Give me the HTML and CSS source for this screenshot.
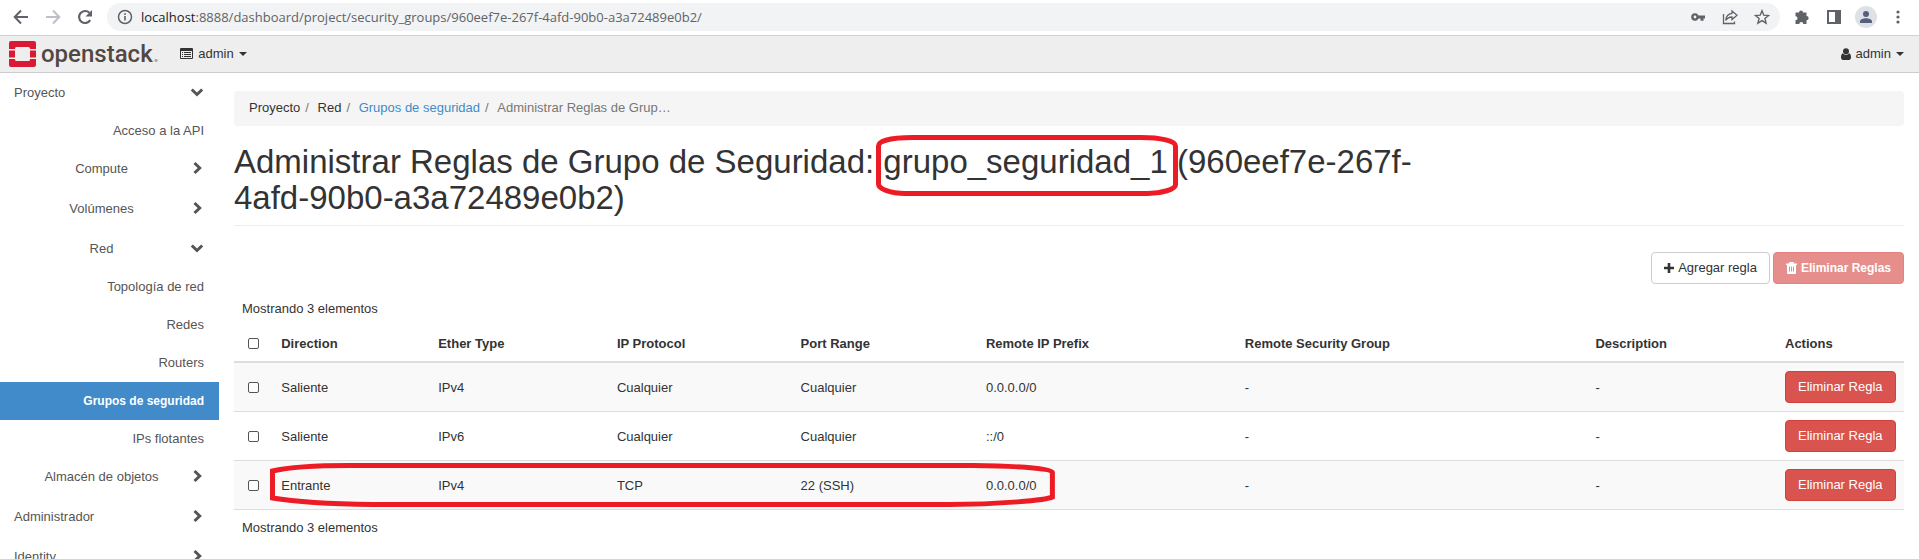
FILE: index.html
```html
<!DOCTYPE html>
<html lang="es">
<head>
<meta charset="utf-8">
<title>Administrar Reglas de Grupo de Seguridad - OpenStack Dashboard</title>
<link rel="stylesheet" href="styles.css">
</head>
<body>
<svg class="defs" width="0" height="0" aria-hidden="true">
  <symbol id="chev-right" viewBox="0 0 16 16"><path d="M5.500 3l5.200 5-5.200 5" fill="none" stroke="currentColor" stroke-width="3"/></symbol>
  <symbol id="chev-down" viewBox="0 0 16 16"><path d="M2.800 5.500L8 10.500l5.200-5" fill="none" stroke="currentColor" stroke-width="3"/></symbol>
</svg>
<div class="window">
  <div class="browser">
    <button class="tool" aria-label="Atrás"><svg width="16" height="16" viewBox="0 0 16 16"><path d="M15 8H2M8 1.500L1.700 8 8 14.500" fill="none" stroke="#5f6368" stroke-width="2"/></svg></button>
    <button class="tool" aria-label="Adelante"><svg width="16" height="16" viewBox="0 0 16 16"><path d="M1 8h13M8 1.500L14.300 8 8 14.500" fill="none" stroke="#bdc1c6" stroke-width="2"/></svg></button>
    <button class="tool" aria-label="Recargar"><svg width="16" height="16" viewBox="0 0 16 16"><path d="M13.200 11.200A6 6 0 1 1 12.400 3.800" fill="none" stroke="#5f6368" stroke-width="2.200"/><path d="M15 1v6.500H8.500z" fill="#5f6368"/></svg></button>
    <div class="address">
      <svg width="16" height="16" viewBox="0 0 16 16"><circle cx="8" cy="8" r="6.500" fill="none" stroke="#5f6368" stroke-width="1.500"/><path d="M8 7v4.500M8 4.300v1.600" stroke="#5f6368" stroke-width="1.600"/></svg>
      <span class="url"><span class="host">localhost</span>:8888/dashboard/project/security_groups/960eef7e-267f-4afd-90b0-a3a72489e0b2/</span>
      <button class="tool" aria-label="Contraseñas"><svg width="16" height="16" viewBox="0 0 16 16"><path fill-rule="evenodd" d="M5 4.200a3.800 3.800 0 0 1 3.500 2.300H15v3h-1.500v2.300h-3V9.500h-2A3.800 3.800 0 1 1 5 4.200zm0 2.400a1.400 1.400 0 1 0 0 2.800 1.400 1.400 0 0 0 0-2.800z" fill="#5f6368"/></svg></button>
      <button class="tool" aria-label="Compartir"><svg width="16" height="16" viewBox="0 0 16 16"><path d="M1.500 5v9.500h11v-2M10 2l5 4.300-5 4.200V8C7 8 5 9.300 3.700 11.300 4 7.800 6 4.800 10 4.300z" fill="none" stroke="#5f6368" stroke-width="1.300"/></svg></button>
      <button class="tool" aria-label="Favoritos"><svg width="16" height="16" viewBox="0 0 16 16"><path d="M8 1.800l1.800 4.400 4.800.3-3.700 3 1.200 4.700L8 11.600l-4.100 2.600 1.200-4.700-3.700-3 4.800-.3z" fill="none" stroke="#5f6368" stroke-width="1.400"/></svg></button>
    </div>
    <div class="extras">
      <button class="tool" aria-label="Extensiones"><svg width="16" height="16" viewBox="0 0 16 16"><path d="M5 3.500a2 2 0 0 1 4 0h3.500V7a2 2 0 0 1 0 4.300V15H9.300a2 2 0 0 0-4 0H1.500v-3.700a2 2 0 0 0 0-4V3.500z" fill="#5f6368"/></svg></button>
      <button class="tool" aria-label="Panel lateral"><svg width="16" height="16" viewBox="0 0 16 16"><path fill-rule="evenodd" d="M1 1h14v14H1zm2 2v10h6V3z" fill="#5f6368"/></svg></button>
      <button class="tool avatar" aria-label="Perfil"><svg width="22" height="22" viewBox="0 0 22 22"><circle cx="11" cy="11" r="11" fill="#dee1e6"/><circle cx="11" cy="8" r="3" fill="#56607a"/><path d="M5 17v-1.500c0-2.300 3.500-3.300 6-3.300s6 1 6 3.300V17z" fill="#56607a"/></svg></button>
      <button class="tool" aria-label="Menú"><svg width="16" height="16" viewBox="0 0 16 16" fill="#5f6368"><circle cx="8" cy="3" r="1.600"/><circle cx="8" cy="8" r="1.600"/><circle cx="8" cy="13" r="1.600"/></svg></button>
    </div>
  </div>

  <header class="navbar">
    <a class="brand" href="#">
      <svg width="27" height="26" viewBox="0 0 27 26" aria-hidden="true"><g fill="#da1a32"><path d="M2 0h23a2 2 0 0 1 2 2v6h-6V7.500a1.500 1.500 0 0 0-1.500-1.500h-12A1.500 1.500 0 0 0 6 7.500V8H0V2a2 2 0 0 1 2-2z"/><path d="M0 9.500h6v7H0zM21 9.500h6v7h-6z"/><path d="M0 18h6v.5A1.500 1.500 0 0 0 7.500 20h12a1.500 1.500 0 0 0 1.500-1.500V18h6v6a2 2 0 0 1-2 2H2a2 2 0 0 1-2-2z"/></g></svg>
      <span class="brand-name">openstack<span class="mark">.</span></span>
    </a>
    <button class="menu">
      <svg width="13" height="11" viewBox="0 0 13 11"><path fill-rule="evenodd" d="M1 0h11a1 1 0 0 1 1 1v9a1 1 0 0 1-1 1H1a1 1 0 0 1-1-1V1a1 1 0 0 1 1-1zm0 3v7h11V3z" fill="#333"/><path d="M2 4.500h1M4 4.500h7M2 6.500h1M4 6.500h7M2 8.500h1M4 8.500h7" stroke="#333"/></svg>
      <span>admin</span><i class="caret"></i>
    </button>
    <button class="menu user">
      <svg width="10" height="12" viewBox="0 0 10 12" fill="#333"><circle cx="5" cy="3.200" r="3"/><path d="M2 5.200c1.600 2 4.400 2 6 0C9.500 5.600 10 7.500 10 9.500 10 11 9 12 8 12H2c-1 0-2-1-2-2.500C0 7.500.5 5.600 2 5.200z"/></svg>
      <span>admin</span><i class="caret"></i>
    </button>
  </header>

  <div class="body">
    <nav class="sidebar">
      <a class="group top" href="#"><span>Proyecto</span><svg class="chev"><use href="#chev-down"/></svg></a>
      <div class="leaves"><a class="leaf" href="#">Acceso a la API</a></div>
      <a class="group" href="#"><span>Compute</span><svg class="chev"><use href="#chev-right"/></svg></a>
      <a class="group" href="#"><span>Volúmenes</span><svg class="chev"><use href="#chev-right"/></svg></a>
      <a class="group" href="#"><span>Red</span><svg class="chev"><use href="#chev-down"/></svg></a>
      <div class="leaves">
        <a class="leaf" href="#">Topología de red</a>
        <a class="leaf" href="#">Redes</a>
        <a class="leaf" href="#">Routers</a>
        <a class="leaf active" href="#">Grupos de seguridad</a>
        <a class="leaf" href="#">IPs flotantes</a>
      </div>
      <a class="group" href="#"><span>Almacén de objetos</span><svg class="chev"><use href="#chev-right"/></svg></a>
      <a class="group top" href="#"><span>Administrador</span><svg class="chev"><use href="#chev-right"/></svg></a>
      <a class="group top" href="#"><span>Identity</span><svg class="chev"><use href="#chev-right"/></svg></a>
    </nav>

    <main class="content">
      <ol class="breadcrumb">
        <li>Proyecto</li><li>Red</li><li><a href="#">Grupos de seguridad</a></li><li class="current">Administrar Reglas de Grup…</li>
      </ol>
      <div class="page-header">
        <h1>Administrar Reglas de Grupo de Seguridad: <span class="marked">grupo_seguridad_1<svg class="ring ring-title" viewBox="0 0 302 61" preserveAspectRatio="none" aria-hidden="true"><path d="M2.500 11C2.500 6 15 2.500 37 2.500H265C285 2.500 299.500 6 299.500 11V50C299.500 54 286 58.500 272 58.500H29C15 58.500 2.500 54 2.500 49Z"/></svg></span> (960eef7e-267f-4afd-90b0-a3a72489e0b2)</h1>
      </div>
      <div class="actions">
        <button class="btn"><svg width="10" height="10" viewBox="0 0 10 10"><path d="M5 0v10M0 5h10" stroke="#333" stroke-width="2.600"/></svg>Agregar regla</button>
        <button class="btn danger strong" disabled><svg width="11" height="12" viewBox="0 0 11 12"><path fill-rule="evenodd" d="M3.500 0h4l.6 1.500H11V3h-1v8a1 1 0 0 1-1 1H2a1 1 0 0 1-1-1V3H0V1.500h2.900zM3 4.500v5h1v-5zm2 0v5h1v-5zm2 0v5h1v-5z" fill="#fff"/></svg>Eliminar Reglas</button>
      </div>
      <div class="count">Mostrando 3 elementos</div>
      <table class="rules">
        <colgroup><col class="c-check"><col class="c-dir"><col class="c-ether"><col class="c-proto"><col class="c-port"><col class="c-prefix"><col class="c-group"><col class="c-desc"><col></colgroup>
        <thead>
          <tr><th class="check"><input type="checkbox" aria-label="Seleccionar todo"></th><th>Direction</th><th>Ether Type</th><th>IP Protocol</th><th>Port Range</th><th>Remote IP Prefix</th><th>Remote Security Group</th><th>Description</th><th>Actions</th></tr>
        </thead>
        <tbody>
          <tr><td class="check"><input type="checkbox" aria-label="Seleccionar regla 1"></td><td>Saliente</td><td>IPv4</td><td>Cualquier</td><td>Cualquier</td><td>0.0.0.0/0</td><td>-</td><td>-</td><td><button class="btn danger">Eliminar Regla</button></td></tr>
          <tr><td class="check"><input type="checkbox" aria-label="Seleccionar regla 2"></td><td>Saliente</td><td>IPv6</td><td>Cualquier</td><td>Cualquier</td><td>::/0</td><td>-</td><td>-</td><td><button class="btn danger">Eliminar Regla</button></td></tr>
          <tr class="marked-row"><td class="check"><input type="checkbox" aria-label="Seleccionar regla 3"><svg class="ring ring-row" viewBox="0 0 786 44" preserveAspectRatio="none" aria-hidden="true"><path d="M2.500 8C15 5 45 2.500 80 2.500H704C745 3 783.500 5 783.500 9V34C778 37 730 41.500 680 41.500H103C60 41 20 38 2.500 35Z"/></svg></td><td>Entrante</td><td>IPv4</td><td>TCP</td><td>22 (SSH)</td><td>0.0.0.0/0</td><td>-</td><td>-</td><td><button class="btn danger">Eliminar Regla</button></td></tr>
        </tbody>
      </table>
      <div class="count">Mostrando 3 elementos</div>
    </main>
  </div>
</div>
</body>
</html>
```
FILE: styles.css
```css
* { box-sizing: border-box; }
body {
  margin: 0;
  font: 13px/19px "Liberation Sans", Arial, sans-serif;
  color: #333;
  background: #fff;
}
a { color: inherit; text-decoration: none; }
button { font: inherit; color: inherit; cursor: pointer; }
svg { display: block; flex: none; }
.defs { position: absolute; }
.window { height: 100vh; overflow: hidden; display: flex; flex-direction: column; }

/* Browser bar */
.browser {
  display: flex;
  align-items: center;
  gap: 16px;
  flex: none;
  padding: 3px 13px 4px 13px;
  border-bottom: 1px solid #d0d1d3;
}
.tool { border: 0; padding: 0; background: none; }
.address {
  flex: 1;
  display: flex;
  align-items: center;
  gap: 16px;
  height: 28px;
  margin-left: -2px;
  padding: 0 10px;
  border-radius: 14px;
  background: #f1f3f4;
}
.url {
  flex: 1;
  margin-left: -8px;
  font: 13px/20px "Open Sans", "Noto Sans", sans-serif;
  color: #5f6368;
}
.host { color: #202124; }
.extras { display: flex; align-items: center; gap: 16px; margin-left: -2px; }
.avatar { margin: 0 -3px; }

/* Top bar */
.navbar {
  display: flex;
  align-items: center;
  flex: none;
  height: 37px;
  padding: 0 15px 1px 9px;
  background: #eee;
  border-bottom: 1px solid #ccc;
}
.brand { display: flex; align-items: center; gap: 5px; margin-right: 21px; }
.brand-name { font: 500 24px/28px "Liberation Sans Narrow", Roboto, sans-serif; color: #524843; }
.mark { color: #aaa; }
.menu {
  display: flex;
  align-items: center;
  gap: 5px;
  border: 0;
  padding: 0;
  background: none;
}
.user { margin-left: auto; }
.caret {
  border-top: 4px solid #333;
  border-left: 4px solid transparent;
  border-right: 4px solid transparent;
}

/* Sidebar */
.body { display: flex; flex: 1; min-height: 0; }
.sidebar { width: 219px; flex: none; color: #555; overflow: hidden; }
.group {
  display: flex;
  align-items: center;
  height: 40px;
  padding: 0 14px 2px;
}
.group span { flex: 1; text-align: center; }
.group.top span { text-align: left; }
.chev { width: 16px; height: 16px; }
.leaves { margin: -1px 0; }
.leaf { display: block; padding: 0 15px; line-height: 38px; text-align: right; }
.leaf.active { background: #428bca; color: #fff; font-size: 12px; font-weight: bold; }

/* Content */
.content { flex: 1; min-width: 0; padding: 18px 15px 0; }
.breadcrumb {
  display: flex;
  list-style: none;
  margin: 0 0 18px;
  padding: 7px 15px 9px;
  border-radius: 4px;
  background: #f5f5f5;
}
.breadcrumb li + li::before { content: "/\00a0"; padding: 0 5px; color: #777; }
.breadcrumb a { color: #428bca; }
.breadcrumb .current { color: #777; }
.page-header { padding-bottom: 9px; border-bottom: 1px solid #eee; }
h1 { max-width: 72%; margin: 0; font-size: 33px; line-height: 36px; font-weight: normal; }
.marked { position: relative; }
.actions { display: flex; justify-content: flex-end; gap: 3px; margin: 26px 0 7px; }
.btn {
  display: inline-flex;
  align-items: center;
  gap: 4px;
  padding: 6px 12px;
  line-height: 18px;
  border: 1px solid #ccc;
  border-radius: 4px;
  background: #fff;
  white-space: nowrap;
}
.btn.danger { color: #fff; background: #d9534f; border-color: #d43f3a; }
.btn.strong { font-size: 12px; font-weight: bold; }
.btn:disabled { opacity: 0.65; }
.count { padding: 8px; }

.rules { width: 100%; table-layout: fixed; border-collapse: separate; border-spacing: 0; }
.rules th, .rules td { padding: 8px; text-align: left; border-bottom: 1px solid #ddd; }
.rules th { border-bottom-width: 2px; }
.rules .check { text-align: center; }
.rules tbody tr:nth-child(odd) { background: #f9f9f9; }
.rules td .btn { display: flex; }
.c-check { width: 2.35%; }
.c-dir { width: 9.4%; }
.c-ether { width: 10.7%; }
.c-proto { width: 11%; }
.c-port { width: 11.1%; }
.c-prefix { width: 15.5%; }
.c-group { width: 21%; }
.c-desc { width: 11.35%; }
input[type="checkbox"] {
  appearance: none;
  display: block;
  width: 11px;
  height: 11px;
  margin: 0 auto;
  border: 1px solid #555;
  border-radius: 2px;
  background: #fff;
}

/* Hand-drawn highlights over the content */
.ring { position: absolute; pointer-events: none; overflow: visible; }
.ring path { fill: none; stroke: #ed1c24; stroke-width: 5; vector-effect: non-scaling-stroke; }
.ring-title { left: -7px; top: -8px; width: 302px; height: 61px; }
.marked-row { position: relative; }
.ring-row { left: 36px; top: 2px; width: 47%; height: 44px; }
```
